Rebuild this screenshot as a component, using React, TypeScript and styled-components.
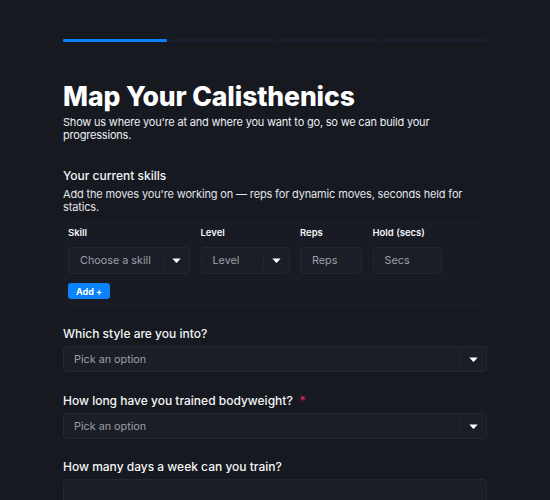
import React from 'react';
import styled, { createGlobalStyle } from 'styled-components';

const GlobalStyle = createGlobalStyle`
  html, body {
    margin: 0;
    background: #161920;
  }
  body {
    font-family: Inter, "Noto Sans", sans-serif;
    color: #f4f5f7;
    -webkit-font-smoothing: antialiased;
  }
  * {
    box-sizing: border-box;
  }
`;

const Page = styled.div`
  width: 424px;
  margin: 0 auto;
  padding-top: 39px;
`;

const Progress = styled.div`
  display: grid;
  grid-template-columns: repeat(4, 1fr);
  gap: 3px;
`;

const Step = styled.div<{ $done?: boolean }>`
  height: 3px;
  border-radius: 1px;
  background: ${({ $done }) => ($done ? '#0a82fb' : '#18202d')};
`;

const Title = styled.h1`
  margin: 38px 0 0;
  font-size: 26.5px;
  line-height: 32px;
  font-weight: 800;
  letter-spacing: -0.1px;
  color: #ffffff;
`;

const Lead = styled.p`
  margin: 4px 0 0;
  font-size: 11px;
  line-height: 13px;
  letter-spacing: -0.2px;
  color: #eceef2;
`;

const Section = styled.div<{ $gap?: number }>`
  margin-top: ${({ $gap }) => $gap ?? 20}px;
`;

const Heading = styled.div`
  font-size: 12px;
  font-weight: 500;
  line-height: 15px;
  color: #f4f5f7;
  display: flex;
  align-items: center;
  gap: 7px;
`;

const Hint = styled.p`
  margin: 5px 0 0;
  font-size: 11px;
  line-height: 13px;
  letter-spacing: -0.15px;
  color: #e2e4e9;
`;

const Required = styled.span`
  color: #e0285f;
  font-size: 11px;
  line-height: 1;
  text-shadow: 0 0 4px rgba(224, 40, 95, 0.6);
`;

const Card = styled.div`
  margin-top: 7px;
  background: #181b23;
  border-radius: 4px;
  padding: 6px 5px 8px;
`;

const Grid = styled.div`
  display: grid;
  grid-template-columns: 122px 89px 62px 69px;
  column-gap: 10.5px;
  row-gap: 8px;
`;

const ColLabel = styled.div`
  font-size: 9.5px;
  font-weight: 600;
  line-height: 12px;
  color: #f4f5f7;
`;

const Box = styled.div`
  height: 27px;
  display: flex;
  align-items: center;
  background: #1b1e26;
  border: 1px solid #242730;
  border-radius: 4px;
  font-size: 10.8px;
  color: #9b9ea6;
`;

const Placeholder = styled.span<{ $pad?: number }>`
  flex: 1;
  padding-left: ${({ $pad }) => $pad ?? 10}px;
`;

const Toggle = styled.span`
  width: 26px;
  align-self: stretch;
  display: flex;
  align-items: center;
  justify-content: center;
  border-left: 1px solid #23262e;
  margin: 4px 0;
`;

const AddButton = styled.button`
  display: block;
  margin-top: 9px;
  height: 16px;
  padding: 0 8px;
  border: none;
  border-radius: 3px;
  background: #0a82fb;
  color: #ffffff;
  font-family: inherit;
  font-size: 9px;
  font-weight: 700;
  cursor: pointer;
`;

const Field = styled(Box)`
  margin-top: 5px;
  height: 26px;
`;

const Caret = () => (
  <svg width="9" height="5" viewBox="0 0 9 5">
    <path d="M0.4 0.4h8.2L5.1 4.4a0.8 0.8 0 0 1-1.2 0z" fill="#ffffff" />
  </svg>
);

const Select = ({ text }: { text: string }) => (
  <Box>
    <Placeholder $pad={11}>{text}</Placeholder>
    <Toggle>
      <Caret />
    </Toggle>
  </Box>
);

const App = () => (
  <>
    <GlobalStyle />
    <Page>
      <Progress>
        <Step $done />
        <Step />
        <Step />
        <Step />
      </Progress>

      <Title>Map Your Calisthenics</Title>
      <Lead>
        Show us where you're at and where you want to go, so we can build your
        progressions.
      </Lead>

      <Section $gap={26}>
        <Heading>Your current skills</Heading>
        <Hint>
          Add the moves you're working on — reps for dynamic moves, seconds held for
          statics.
        </Hint>
        <Card>
          <Grid>
            <ColLabel>Skill</ColLabel>
            <ColLabel>Level</ColLabel>
            <ColLabel>Reps</ColLabel>
            <ColLabel>Hold (secs)</ColLabel>
            <Select text="Choose a skill" />
            <Select text="Level" />
            <Box>
              <Placeholder $pad={11}>Reps</Placeholder>
            </Box>
            <Box>
              <Placeholder $pad={11}>Secs</Placeholder>
            </Box>
          </Grid>
          <AddButton>Add +</AddButton>
        </Card>
      </Section>

      <Section $gap={19}>
        <Heading>Which style are you into?</Heading>
        <Field>
          <Placeholder $pad={10}>Pick an option</Placeholder>
          <Toggle>
            <Caret />
          </Toggle>
        </Field>
      </Section>

      <Section $gap={21}>
        <Heading>
          How long have you trained bodyweight? <Required>*</Required>
        </Heading>
        <Field>
          <Placeholder $pad={10}>Pick an option</Placeholder>
          <Toggle>
            <Caret />
          </Toggle>
        </Field>
      </Section>

      <Section>
        <Heading>How many days a week can you train?</Heading>
        <Field />
      </Section>
    </Page>
  </>
);

export default App;
